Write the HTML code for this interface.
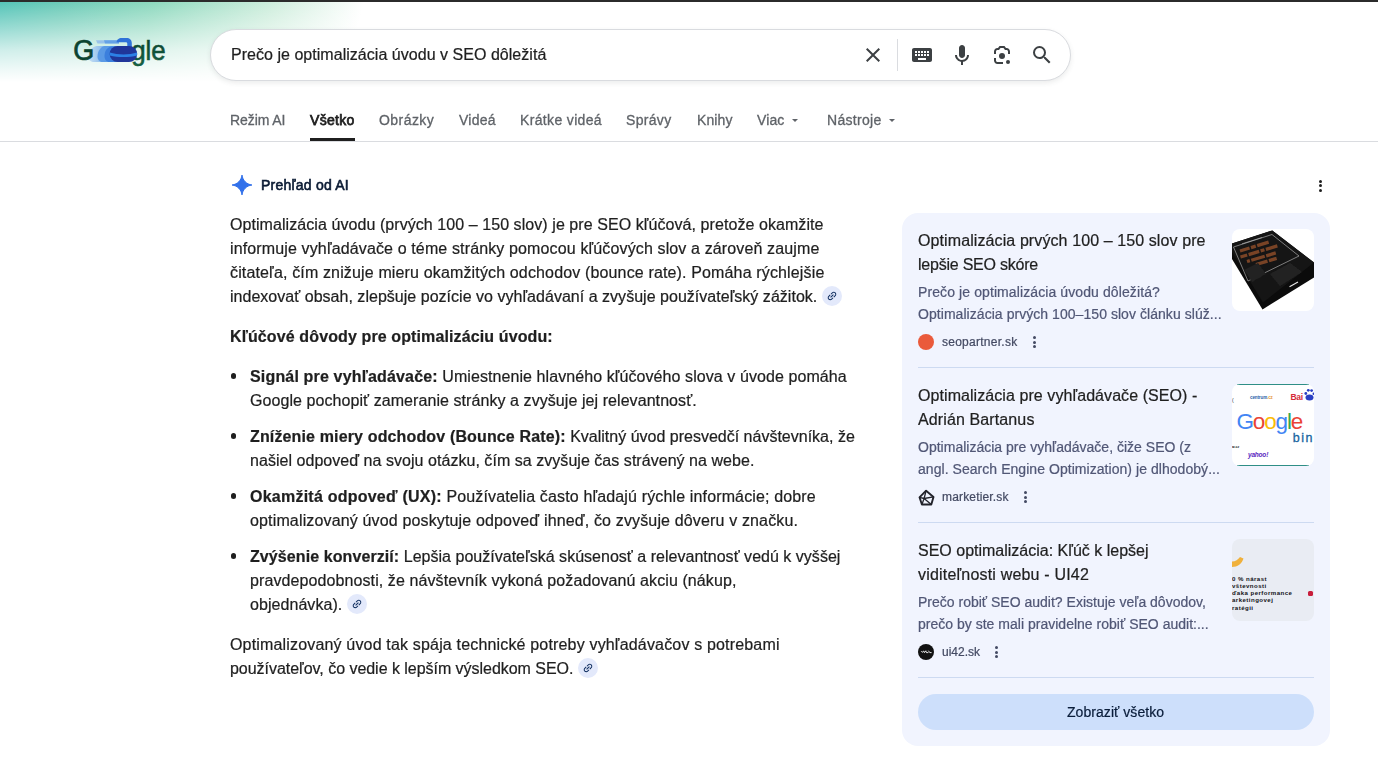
<!DOCTYPE html>
<html lang="sk">
<head>
<meta charset="utf-8">
<title>Prečo je optimalizácia úvodu v SEO dôležitá</title>
<style>
*{box-sizing:border-box;margin:0;padding:0}
html,body{width:1378px;height:762px;overflow:hidden;background:#fff}
body{font-family:"Liberation Sans",Arial,sans-serif;color:#1f1f1f;position:relative}
.abs{position:absolute}
.t{position:absolute;white-space:pre;will-change:transform;-webkit-text-stroke:0.22px currentColor}
#topbar{left:0;top:0;width:1378px;height:2px;background:#2b2b2b}
#grad{left:0;top:2px;width:420px;height:81px;
 background:
  linear-gradient(to bottom, rgba(255,255,255,0) 0px, rgba(255,255,255,0.41) 28px, rgba(255,255,255,0.71) 48px, rgba(255,255,255,0.9) 68px, #fff 80px),
  linear-gradient(105deg, #55c4b8 0px, #6ccbb8 60px, #8fd9bf 150px, #cfeedd 265px, #fff 352px);}
#search{left:210px;top:29px;width:861px;height:52px;border-radius:26px;background:#fff;border:1px solid #d9dbdf;box-shadow:0 2px 5px rgba(60,64,67,.10)}
#hr{left:0;top:141px;width:1378px;height:1px;background:#dadce0}
.bul{left:230.5px;width:5.5px;height:5.5px;border-radius:50%;background:#1f1f1f}
.chip{display:inline-block;width:20px;height:20px;border-radius:10px;background:#e3e9fb;vertical-align:top;margin-left:4.7px;margin-top:1px;position:relative}
.chip svg{position:absolute;left:4px;top:4px}
#card{left:902px;top:213px;width:428px;height:533px;border-radius:16px;background:#f1f4fe}
.div{left:918px;width:396px;height:1px;background:#cddaf1}
.th{left:1232px;width:82px;height:82px;border-radius:8px;overflow:hidden}
#btn{left:918px;top:694px;width:396px;height:36px;border-radius:18px;background:#cddffb}
.dots{width:3px;height:3px;border-radius:50%}
.dots:before,.dots:after{content:"";position:absolute;left:0;width:3px;height:3px;border-radius:50%;background:inherit}
.dots:before{top:-4.6px}.dots:after{top:4.6px}
.arr{width:0;height:0;border-left:3.2px solid transparent;border-right:3.2px solid transparent;border-top:3.4px solid #5f6368;top:119.3px}
</style>
</head>
<body>
<div class="abs" id="grad"></div>
<div class="abs" id="topbar"></div>
<svg class="abs" style="left:70px;top:30px" width="104" height="44" viewBox="70 30 104 44">
<defs>
<linearGradient id="tr" x1="0" x2="1" y1="0" y2="0"><stop offset="0" stop-color="#b4d4f3" stop-opacity=".7"/><stop offset=".55" stop-color="#7db1ea"/><stop offset="1" stop-color="#4a8fe2"/></linearGradient>
<linearGradient id="gg" x1="0" x2="0" y1="0" y2="1"><stop offset="0" stop-color="#0a3a2a"/><stop offset="1" stop-color="#176645"/></linearGradient>
</defs>
<text x="131.200" y="60.300" font-family="Liberation Sans, Arial, sans-serif" font-size="28" fill="url(#gg)" stroke="#0f5238" stroke-width=".600" textLength="34.500" lengthAdjust="spacingAndGlyphs">gle</text>
<!-- motion trail -->
<path d="M96 40.200 H119 V43.400 H97.500 Z" fill="#8fbbeb" opacity=".85"/>
<path d="M104 40.200 H119 V43.400 H105 Z" fill="#5f9ee6" opacity=".9"/>
<path d="M96.500 46 H118 V62 H94 C91 62 88.500 60 88.500 57 C88.500 51 92 47 96.500 46Z" fill="url(#tr)"/>
<path d="M104.500 46 H120 V62 H102.500 C99.500 62 97.500 59.500 97.500 56.500 C97.500 51 100.500 47.200 104.500 46Z" fill="#5a9ae5"/>
<path d="M111 46.500 H122 V62 H109.500 C106.500 62 104.500 59.500 104.500 56 C104.500 51 107 47.600 111 46.500Z" fill="#3b7fdd"/>
<text x="73.200" y="60.300" font-family="Liberation Sans, Arial, sans-serif" font-size="29.500" fill="#0b4330" stroke="#0b4330" stroke-width=".700" textLength="21" lengthAdjust="spacingAndGlyphs">G</text>
<!-- handle -->
<path d="M116.600 42.600 C116.600 39.700 118.800 38 121.600 38 H126.500 C129.800 38 131.800 40 131.800 43 V47 H127.300 V43.800 C127.300 42.900 126.800 42.300 125.800 42.300 H116.800 Z" fill="#2f72d8"/>
<!-- stone -->
<rect x="109.700" y="46" width="27.400" height="16" rx="8" ry="7.600" fill="#20369a"/>
<path d="M109.800 52.600 C118 55.200 129 55.200 137 52.600 C137.200 53.500 137.200 54.500 137 55.400 C129 57.600 118 57.600 109.800 55.400 C109.600 54.500 109.600 53.500 109.800 52.600Z" fill="#2c80e6"/>
</svg>

<div class="abs" id="search"></div>
<!-- clear X -->
<svg class="abs" style="left:861px;top:43px" width="24" height="24" viewBox="0 0 24 24"><path d="M19 6.410L17.590 5 12 10.590 6.410 5 5 6.410 10.590 12 5 17.590 6.410 19 12 13.410 17.590 19 19 17.590 13.410 12z" fill="#3c4043"/></svg>
<div class="abs" style="left:897px;top:39px;width:1px;height:32px;background:#dadce0"></div>
<!-- keyboard -->
<svg class="abs" style="left:910px;top:43px" width="24" height="24" viewBox="0 0 24 24"><path d="M20 5H4c-1.100 0-1.990.9-1.990 2L2 17c0 1.100.9 2 2 2h16c1.100 0 2-.9 2-2V7c0-1.100-.9-2-2-2zm-9 3h2v2h-2V8zm0 3h2v2h-2v-2zM8 8h2v2H8V8zm0 3h2v2H8v-2zm-1 2H5v-2h2v2zm0-3H5V8h2v2zm9 7H8v-2h8v2zm0-4h-2v-2h2v2zm0-3h-2V8h2v2zm3 3h-2v-2h2v2zm0-3h-2V8h2v2z" fill="#3c4043"/></svg>
<!-- mic -->
<svg class="abs" style="left:950px;top:42.500px" width="24" height="24" viewBox="0 0 24 24"><path d="M12 15c1.660 0 3-1.310 3-2.970v-7.020c0-1.660-1.340-3.010-3-3.010s-3 1.340-3 3.010v7.020c0 1.660 1.340 2.970 3 2.970z" fill="#3c4043"/><path d="M11 18.080h2v3.920h-2z" fill="#3c4043"/><path d="M7.050 16.870c-1.270-1.330-2.050-2.830-2.050-4.870h2c0 1.450 0.560 2.420 1.470 3.380v0.320l-1.150 1.180z" fill="#3c4043"/><path d="M12 16.930a4.970 5.250 0 0 1 -3.540 -1.550l-1.410 1.490c1.260 1.340 3.020 2.130 4.950 2.130 3.870 0 6.990-2.920 6.990-7h-1.990c0 2.920-2.240 4.930-5 4.930z" fill="#3c4043"/></svg>
<!-- lens -->
<svg class="abs" style="left:990px;top:43.700px" width="24" height="24" viewBox="0 0 24 24" fill="#3c4043"><path d="M6 7.500C6 6.670 6.670 6 7.500 6H9l1.500-2h3L15 6h1.500c.83 0 1.500.67 1.500 1.500V10h2V7.500C20 5.570 18.430 4 16.500 4H16l-1.500-2h-5L8 4h-.5C5.570 4 4 5.570 4 7.500V10h2V7.500z"/><path d="M6 16.500V14H4v2.500C4 18.430 5.570 20 7.500 20H13v-2H7.500c-.83 0-1.500-.67-1.500-1.500z"/><circle cx="12" cy="12" r="3"/><circle cx="18" cy="18" r="2"/></svg>
<!-- search -->
<svg class="abs" style="left:1030px;top:43px" width="24" height="24" viewBox="0 0 24 24"><path d="M15.500 14h-.79l-.28-.27A6.471 6.471 0 0 0 16 9.500 6.500 6.500 0 1 0 9.500 16c1.610 0 3.090-.59 4.230-1.570l.27.280v.79l5 4.990L20.490 19l-4.990-5zm-6 0C7.010 14 5 11.990 5 9.500S7.010 5 9.500 5 14 7.010 14 9.500 11.990 14 9.500 14z" fill="#3c4043"/></svg>

<div class="abs" style="left:310px;top:138px;width:45px;height:3px;background:#1f1f1f"></div>
<div class="abs arr" style="left:791.8px"></div>
<div class="abs arr" style="left:889.2px"></div>
<div class="abs" id="hr"></div>

<svg class="abs" style="left:231px;top:174px" width="22" height="22" viewBox="-1.300 -1.300 26.600 26.600"><path d="M12 0C12.800 6.400 17.600 11.200 24 12C17.600 12.800 12.800 17.600 12 24C11.200 17.600 6.400 12.800 0 12C6.400 11.200 11.200 6.400 12 0Z" fill="#3271ea" stroke="#3271ea" stroke-width="1.200" stroke-linejoin="round"/></svg>
<div class="abs dots" style="left:1319.2px;top:184.3px;background:#1f1f1f"></div>

<div class="abs bul" style="top:373.3px"></div>
<div class="abs bul" style="top:433.3px"></div>
<div class="abs bul" style="top:493.3px"></div>
<div class="abs bul" style="top:553.3px"></div>

<div class="abs" id="card"></div>
<div class="abs div" style="top:367px"></div>
<div class="abs div" style="top:522px"></div>
<div class="abs div" style="top:677px"></div>
<div class="abs" id="btn"></div>

<!-- favicons -->
<div class="abs" style="left:918px;top:334px;width:16px;height:16px;border-radius:50%;background:#ea5a3b"></div>
<div class="abs dots" style="left:1033.3px;top:340.6px;background:#444a63"></div>
<svg class="abs" style="left:917.500px;top:488.500px" width="17" height="17" viewBox="-0.500 -0.500 17 17" fill="none" stroke="#22232b" stroke-width="1.900" stroke-linejoin="round"><path d="M7.600 1.200L15 7.400 12.800 15 3.400 15 1 7.800z"/><path d="M7.600 1.200L5.600 9 12.800 15M1 7.800l4.600 1.200L3.400 15M5.600 9L15 7.400" stroke-width="1.300"/></svg>
<div class="abs" style="left:918px;top:644px;width:16px;height:16px;border-radius:50%;background:#121212"></div>
<svg class="abs" style="left:918px;top:644px" width="16" height="16" viewBox="0 0 16 16" fill="none" stroke="#fff" stroke-width="0.900" stroke-linecap="round"><path d="M3.400 7.600q.8 1.600 1.600 0t1.400 1l1.400-1.800.6 1.800h1.600M10.600 7l1.200 1.600h1.400"/></svg>

<div class="abs dots" style="left:1024.1px;top:495.7px;background:#444a63"></div>
<!--FAV3-->
<div class="abs dots" style="left:995.1px;top:650.7px;background:#444a63"></div>

<!-- thumb 1: black book on white -->
<div class="abs th" style="top:229px;background:#fff">
<svg width="82" height="82" viewBox="0 0 82 82">
<defs><filter id="bl" x="-10%" y="-10%" width="120%" height="120%"><feGaussianBlur stdDeviation=".55"/></filter></defs>
<path d="M0 14.400L40.300 1.500 82 33.500 82 48.400 30.500 80.400 0 30z" fill="#0b0b0b"/>
<path d="M0 14.400L40.300 1.500 82 33.500 31 73.500 0 23z" fill="#151515"/>
<path d="M1.500 18L40 5.500 67 27 16 52z" fill="none" stroke="#c4c4c4" stroke-width=".6"/>
<g stroke="#93502c" stroke-width="3.300" opacity=".8" fill="none" filter="url(#bl)">
<path d="M8 22L45 10.500" stroke-dasharray="10 1.500 5 1.500 12 30"/>
<path d="M8.500 28L50 15.500" stroke-dasharray="7 1.500 11 1.500 4 1.500 12 30"/>
<path d="M15 32.500L52 21.500" stroke-dasharray="3 1.500 14 1.500 10 30"/>
<path d="M24 35.500L46 29" stroke-dasharray="12 1.500 8 30"/>
</g>
<path d="M10 14.800L30 8.500" stroke="#c9c9c9" stroke-width=".9" opacity=".6" filter="url(#bl)"/>
<path d="M38 45L58 34 70 43 48 57z" fill="#232323" filter="url(#bl)"/>
<path d="M12 41L26 34 34 45 20 53z" fill="#202020" filter="url(#bl)"/>
<path d="M57.500 57.800L66 53" stroke="#e6e6e6" stroke-width="1.100"/>
</svg></div>
<!-- thumb 2: search engines -->
<div class="abs th" style="top:384px;background:#fff">
<div class="abs" style="left:5px;top:0;width:72px;height:1px;background:#2f8f86"></div>
<div class="abs" style="left:5px;top:81px;width:72px;height:1px;background:#2f8f86"></div>
<div class="abs" style="left:18px;top:11px;font-size:4.500px;line-height:6px;font-weight:700;color:#2b5fa8;letter-spacing:-.1px">centrum<span style="color:#e8963a">.cz</span></div>
<div class="abs" style="left:58.500px;top:8px;font-size:8.500px;line-height:10px;font-weight:700;color:#d52b3a;letter-spacing:-.3px">Bai</div>
<svg class="abs" style="left:72px;top:4px" width="11" height="13" viewBox="0 0 11 13" fill="#2a3fc4"><ellipse cx="5.500" cy="9.500" rx="4" ry="3"/><circle cx="1.800" cy="5.500" r="1.400"/><circle cx="4.300" cy="2.300" r="1.400"/><circle cx="7.600" cy="2.600" r="1.400"/><circle cx="9.800" cy="5.800" r="1.300"/></svg>
<div class="abs" style="left:4.500px;top:25px;font-size:22.500px;line-height:26px;letter-spacing:-1.150px;white-space:nowrap"><span style="color:#4285f4">G</span><span style="color:#ea4335">o</span><span style="color:#fbbc05">o</span><span style="color:#4285f4">g</span><span style="color:#34a853">l</span><span style="color:#ea4335">e</span></div>
<div class="abs" style="left:60.800px;top:46.500px;font-size:12.500px;line-height:14px;color:#17649f;white-space:nowrap;letter-spacing:1.500px;-webkit-text-stroke:.3px #17649f">bin</div>
<div class="abs" style="left:0;top:60.500px;font-size:3.500px;line-height:4px;font-weight:700;color:#222">м.сz</div>
<div class="abs" style="left:16px;top:67px;font-size:6.500px;line-height:8px;font-weight:700;font-style:italic;color:#5a1fc0;letter-spacing:-.2px">yahoo!</div>
<div class="abs" style="left:0;top:13px;font-size:5px;line-height:6px;color:#222">(</div>
</div>
<!-- thumb 3: ui42 -->
<div class="abs th" style="top:539px;background:#e9ecf3">
<svg class="abs" style="left:0;top:16px" width="14" height="14" viewBox="0 0 14 14"><path d="M0 6.500C3.500 6.500 6 4.500 8 2L11.500 3.500C10 8.500 5.500 12 0 12z" fill="#f0b13c"/></svg>
<div class="abs" style="left:0;top:35.500px;font-size:6.100px;line-height:7.300px;font-weight:700;color:#111116;white-space:pre;letter-spacing:.45px">0 % nárast
vštevnosti
ďaka performance
arketingovej
ratégii</div>
<div class="abs" style="left:75.500px;top:51.500px;width:5.500px;height:5.500px;border-radius:1.500px;background:#c81e3c"></div>
</div>


<div class="t " style="left:230px;top:213px;font-size:16px;line-height:24px;color:#1f1f1f;"><span style="letter-spacing:0.068px;">Optimalizácia úvodu (prvých 100 – 150 slov) je pre SEO kľúčová, pretože okamžite</span></div>
<div class="t " style="left:230px;top:237px;font-size:16px;line-height:24px;color:#1f1f1f;"><span style="letter-spacing:0.133px;">informuje vyhľadávače o téme stránky pomocou kľúčových slov a zároveň zaujme</span></div>
<div class="t " style="left:230px;top:261px;font-size:16px;line-height:24px;color:#1f1f1f;"><span style="letter-spacing:0.147px;">čitateľa, čím znižuje mieru okamžitých odchodov (bounce rate). Pomáha rýchlejšie</span></div>
<div class="t " style="left:230px;top:285px;font-size:16px;line-height:24px;color:#1f1f1f;"><span style="letter-spacing:0.023px;">indexovať obsah, zlepšuje pozície vo vyhľadávaní a zvyšuje používateľský zážitok.</span><span class="chip"><svg viewBox="0 0 24 24" width="12" height="12"><path d="M3.9 12c0-1.71 1.39-3.1 3.100-3.100h4V7H7c-2.760 0-5 2.240-5 5s2.240 5 5 5h4v-1.900H7c-1.710 0-3.100-1.390-3.100-3.100zM8 13h8v-2H8v2zm9-6h-4v1.900h4c1.710 0 3.100 1.390 3.100 3.100s-1.390 3.100-3.100 3.100h-4V17h4c2.760 0 5-2.240 5-5s-2.240-5-5-5z" fill="#0b2a5c" transform="rotate(-45 12 12)"/></svg></span></div>
<div class="t " style="left:230px;top:325px;font-size:16px;line-height:24px;color:#1f1f1f;"><span style="letter-spacing:0.118px;font-weight:700;">Kľúčové dôvody pre optimalizáciu úvodu:</span></div>
<div class="t " style="left:250px;top:365px;font-size:16px;line-height:24px;color:#1f1f1f;"><span style="letter-spacing:0.164px;font-weight:700;">Signál pre vyhľadávače:</span><span style="letter-spacing:0.077px;"> Umiestnenie hlavného kľúčového slova v úvode pomáha</span></div>
<div class="t " style="left:250px;top:389px;font-size:16px;line-height:24px;color:#1f1f1f;"><span style="letter-spacing:0.070px;">Google pochopiť zameranie stránky a zvyšuje jej relevantnosť.</span></div>
<div class="t " style="left:250px;top:425px;font-size:16px;line-height:24px;color:#1f1f1f;"><span style="letter-spacing:0.143px;font-weight:700;">Zníženie miery odchodov (Bounce Rate):</span><span style="letter-spacing:0.001px;"> Kvalitný úvod presvedčí návštevníka, že</span></div>
<div class="t " style="left:250px;top:449px;font-size:16px;line-height:24px;color:#1f1f1f;"><span style="letter-spacing:0.040px;">našiel odpoveď na svoju otázku, čím sa zvyšuje čas strávený na webe.</span></div>
<div class="t " style="left:250px;top:485px;font-size:16px;line-height:24px;color:#1f1f1f;"><span style="letter-spacing:0.235px;font-weight:700;">Okamžitá odpoveď (UX):</span><span style="letter-spacing:0.142px;"> Používatelia často hľadajú rýchle informácie; dobre</span></div>
<div class="t " style="left:250px;top:509px;font-size:16px;line-height:24px;color:#1f1f1f;"><span style="letter-spacing:0.150px;">optimalizovaný úvod poskytuje odpoveď ihneď, čo zvyšuje dôveru v značku.</span></div>
<div class="t " style="left:250px;top:545px;font-size:16px;line-height:24px;color:#1f1f1f;"><span style="letter-spacing:0.088px;font-weight:700;">Zvýšenie konverzií:</span><span style="letter-spacing:0.018px;"> Lepšia používateľská skúsenosť a relevantnosť vedú k vyššej</span></div>
<div class="t " style="left:250px;top:569px;font-size:16px;line-height:24px;color:#1f1f1f;"><span style="letter-spacing:0.098px;">pravdepodobnosti, že návštevník vykoná požadovanú akciu (nákup,</span></div>
<div class="t " style="left:250px;top:593px;font-size:16px;line-height:24px;color:#1f1f1f;"><span style="letter-spacing:0.056px;">objednávka).</span><span class="chip"><svg viewBox="0 0 24 24" width="12" height="12"><path d="M3.9 12c0-1.71 1.39-3.1 3.100-3.100h4V7H7c-2.760 0-5 2.240-5 5s2.240 5 5 5h4v-1.900H7c-1.710 0-3.100-1.390-3.100-3.100zM8 13h8v-2H8v2zm9-6h-4v1.900h4c1.710 0 3.100 1.390 3.100 3.100s-1.390 3.100-3.100 3.100h-4V17h4c2.760 0 5-2.240 5-5s-2.240-5-5-5z" fill="#0b2a5c" transform="rotate(-45 12 12)"/></svg></span></div>
<div class="t " style="left:230px;top:633px;font-size:16px;line-height:24px;color:#1f1f1f;"><span style="letter-spacing:0.170px;">Optimalizovaný úvod tak spája technické potreby vyhľadávačov s potrebami</span></div>
<div class="t " style="left:230px;top:657px;font-size:16px;line-height:24px;color:#1f1f1f;"><span style="letter-spacing:-0.034px;">používateľov, čo vedie k lepším výsledkom SEO.</span><span class="chip"><svg viewBox="0 0 24 24" width="12" height="12"><path d="M3.9 12c0-1.71 1.39-3.1 3.100-3.100h4V7H7c-2.760 0-5 2.240-5 5s2.240 5 5 5h4v-1.900H7c-1.710 0-3.100-1.390-3.100-3.100zM8 13h8v-2H8v2zm9-6h-4v1.900h4c1.710 0 3.100 1.390 3.100 3.100s-1.390 3.100-3.100 3.100h-4V17h4c2.760 0 5-2.240 5-5s-2.240-5-5-5z" fill="#0b2a5c" transform="rotate(-45 12 12)"/></svg></span></div>
<div class="t " style="left:231px;top:44px;font-size:16px;line-height:22px;color:#1f1f1f;"><span style="letter-spacing:0.032px;">Prečo je optimalizácia úvodu v SEO dôležitá</span></div>
<div class="t " style="left:230px;top:111px;font-size:14px;line-height:18px;color:#5f6368;-webkit-text-stroke:0.3px #5f6368"><span style="letter-spacing:-0.077px;">Režim AI</span></div>
<div class="t " style="left:310px;top:111px;font-size:14px;line-height:18px;color:#1f1f1f;-webkit-text-stroke:0.75px #1f1f1f"><span style="letter-spacing:0.298px;">Všetko</span></div>
<div class="t " style="left:379px;top:111px;font-size:14px;line-height:18px;color:#5f6368;-webkit-text-stroke:0.3px #5f6368"><span style="letter-spacing:0.439px;">Obrázky</span></div>
<div class="t " style="left:458.5px;top:111px;font-size:14px;line-height:18px;color:#5f6368;-webkit-text-stroke:0.3px #5f6368"><span style="letter-spacing:0.227px;">Videá</span></div>
<div class="t " style="left:519.5px;top:111px;font-size:14px;line-height:18px;color:#5f6368;-webkit-text-stroke:0.3px #5f6368"><span style="letter-spacing:0.348px;">Krátke videá</span></div>
<div class="t " style="left:626px;top:111px;font-size:14px;line-height:18px;color:#5f6368;-webkit-text-stroke:0.3px #5f6368"><span style="letter-spacing:0.320px;">Správy</span></div>
<div class="t " style="left:696.5px;top:111px;font-size:14px;line-height:18px;color:#5f6368;-webkit-text-stroke:0.3px #5f6368"><span style="letter-spacing:0.094px;">Knihy</span></div>
<div class="t " style="left:756.5px;top:111px;font-size:14px;line-height:18px;color:#5f6368;-webkit-text-stroke:0.3px #5f6368"><span style="letter-spacing:0.129px;">Viac</span></div>
<div class="t " style="left:827px;top:111px;font-size:14px;line-height:18px;color:#5f6368;-webkit-text-stroke:0.3px #5f6368"><span style="letter-spacing:0.295px;">Nástroje</span></div>
<div class="t " style="left:260.6px;top:176px;font-size:14px;line-height:18px;color:#0a1a33;-webkit-text-stroke:0.6px #0a1a33"><span style="letter-spacing:0.227px;">Prehľad od AI</span></div>
<div class="t " style="left:918px;top:229px;font-size:16px;line-height:24px;color:#1f1f1f;"><span style="letter-spacing:0.100px;">Optimalizácia prvých 100 – 150 slov pre</span></div>
<div class="t " style="left:918px;top:253px;font-size:16px;line-height:24px;color:#1f1f1f;"><span style="letter-spacing:-0.232px;">lepšie SEO skóre</span></div>
<div class="t " style="left:918px;top:281px;font-size:14px;line-height:22px;color:#515776;"><span style="letter-spacing:0.099px;">Prečo je optimalizácia úvodu dôležitá?</span></div>
<div class="t " style="left:918px;top:303px;font-size:14px;line-height:22px;color:#515776;"><span style="letter-spacing:0.051px;">Optimalizácia prvých 100–150 slov článku slúž...</span></div>
<div class="t " style="left:942px;top:334px;font-size:12px;line-height:16px;color:#444a63;"><span style="letter-spacing:0.258px;">seopartner.sk</span></div>
<div class="t " style="left:918px;top:384px;font-size:16px;line-height:24px;color:#1f1f1f;"><span style="letter-spacing:0.071px;">Optimalizácia pre vyhľadávače (SEO) -</span></div>
<div class="t " style="left:918px;top:408px;font-size:16px;line-height:24px;color:#1f1f1f;"><span style="letter-spacing:0.118px;">Adrián Bartanus</span></div>
<div class="t " style="left:918px;top:436px;font-size:14px;line-height:22px;color:#515776;"><span style="letter-spacing:0.011px;">Optimalizácia pre vyhľadávače, čiže SEO (z</span></div>
<div class="t " style="left:918px;top:458px;font-size:14px;line-height:22px;color:#515776;"><span style="letter-spacing:0.049px;">angl. Search Engine Optimization) je dlhodobý...</span></div>
<div class="t " style="left:942px;top:489px;font-size:12px;line-height:16px;color:#444a63;"><span style="letter-spacing:0.168px;">marketier.sk</span></div>
<div class="t " style="left:918px;top:539px;font-size:16px;line-height:24px;color:#1f1f1f;"><span style="letter-spacing:-0.001px;">SEO optimalizácia: Kľúč k lepšej</span></div>
<div class="t " style="left:918px;top:563px;font-size:16px;line-height:24px;color:#1f1f1f;"><span style="letter-spacing:0.186px;">viditeľnosti webu - UI42</span></div>
<div class="t " style="left:918px;top:591px;font-size:14px;line-height:22px;color:#515776;"><span style="letter-spacing:0.005px;">Prečo robiť SEO audit? Existuje veľa dôvodov,</span></div>
<div class="t " style="left:918px;top:613px;font-size:14px;line-height:22px;color:#515776;"><span style="letter-spacing:0.013px;">prečo by ste mali pravidelne robiť SEO audit:...</span></div>
<div class="t " style="left:942px;top:644px;font-size:12px;line-height:16px;color:#444a63;"><span style="letter-spacing:0.010px;">ui42.sk</span></div>
<div class="t " style="left:1067.3px;top:703px;font-size:14px;line-height:18px;color:#0a1d3a;"><span style="letter-spacing:0.054px;">Zobraziť všetko</span></div>
</body>
</html>
